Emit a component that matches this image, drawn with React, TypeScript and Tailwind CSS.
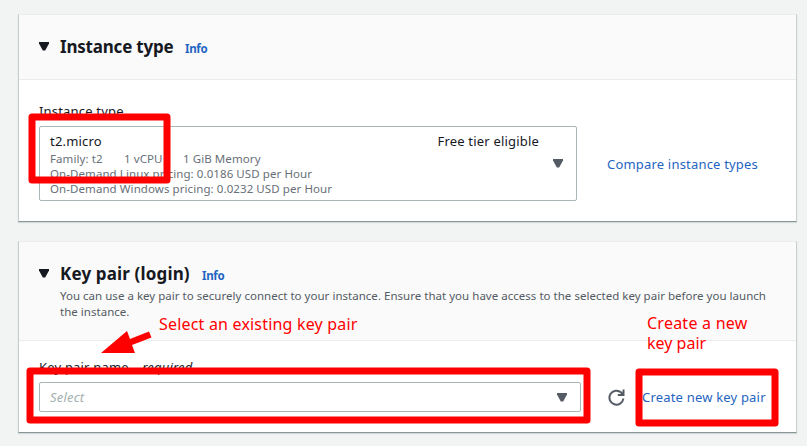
import type { ReactNode } from "react";

function Caret({ className }: { className: string }) {
  return (
    <svg viewBox="0 0 10 9" className={`h-[9px] w-[10px] shrink-0 ${className}`} fill="currentColor">
      <path d="M0 0h10v1.5L6.2 8.5H3.8L0 1.5z" />
    </svg>
  );
}

function Panel({ className, children }: { className: string; children: ReactNode }) {
  return (
    <section
      className={`ml-[18px] w-[779px] border border-t-[#eaeded] border-r-[#c9cecf] border-b-[#879596] border-l-[#c5cccd] bg-white shadow-[0_1px_1px_#d5dbdb] ${className}`}
    >
      {children}
    </section>
  );
}

const link = "text-[#1f65c2]";
const body = "text-[13px] leading-5 tracking-[0.19px]";
const info = "pt-[4px] text-[11.5px] leading-5 font-bold tracking-[-0.3px]";

export default function App() {
  return (
    <main className="relative h-[446px] w-[807px] overflow-hidden bg-[#f2f3f3] pt-[14px] font-['Noto_Sans',sans-serif] text-[#16191f] whitespace-nowrap">
      <Panel className="h-[208px]">
        <header className="flex h-[65px] border-b border-[#eaeded] bg-[#fafafa] pt-5 pl-5">
          <Caret className="mt-[7px]" />
          <h2 className="ml-[11px] w-[125px] text-[17px] leading-6 font-bold tracking-[-0.2px]">Instance type</h2>
          <a className={`${info} ${link}`}>Info</a>
        </header>
        <div className="flex px-5 pt-[21px]">
          <div className="w-[538px]">
            <p className={`h-[25px] ${body}`}>Instance type</p>
            <div className="flex h-[75px] items-center rounded-[2px] border border-[#aab7b8] pr-[13px] pl-[10px]">
              <div className="h-[73px] flex-1 pt-[4px]">
                <div className={`flex h-[20px] justify-between pr-[14px] ${body}`}>
                  <span>t2.micro</span>
                  <span>Free tier eligible</span>
                </div>
                <div className="text-[11.5px] leading-[15px] tracking-[0.08px] text-[#687078]">
                  <p className="flex">
                    <span className="w-[74px]">Family: t2</span>
                    <span className="w-[59px]">1 vCPU</span>
                    <span>1 GiB Memory</span>
                  </p>
                  <p>On-Demand Linux pricing: 0.0186 USD per Hour</p>
                  <p>On-Demand Windows pricing: 0.0232 USD per Hour</p>
                </div>
              </div>
              <Caret className="text-[#545b64]" />
            </div>
          </div>
          <a className={`mt-[53px] ml-[30px] ${body} ${link}`}>Compare instance types</a>
        </div>
      </Panel>

      <Panel className="mt-[19px] h-[192px]">
        <header className="h-[99px] border-b border-[#eaeded] bg-[#fafafa] pt-5 pl-5">
          <div className="flex">
            <Caret className="mt-[7px]" />
            <h2 className="ml-[11px] w-[142px] text-[17px] leading-6 font-bold tracking-[0.15px]">Key pair (login)</h2>
            <a className={`${info} ${link}`}>Info</a>
          </div>
          <p className="mt-[2px] ml-[21px] text-[11.5px] leading-4 tracking-[0.023px] text-[#545b64]">
            You can use a key pair to securely connect to your instance. Ensure that you have access to the selected key pair before you launch
            <br />
            the instance.
          </p>
        </header>
        <div className="flex pt-[16px] pl-5">
          <div className="w-[542px]">
            <p className={`h-[25px] ${body}`}>
              Key pair name <i className="ml-0.5">- required</i>
            </p>
            <div className={`flex h-[30px] items-center justify-between rounded-[2px] border border-[#aab7b8] pr-[13px] pl-[10px] text-[#a3b0b1] italic ${body}`}>
              <span>Select</span>
              <Caret className="text-[#545b64]" />
            </div>
          </div>
          <svg viewBox="0 0 17 17" className="mt-[32px] ml-[27px] size-[17px]" fill="none" stroke="#545b64" strokeWidth="2">
            <path d="M15.4 9.5A7 7 0 1 1 13.2 3.5L15 5.5" />
            <path d="M15.5 0.5v5.5H9.8" />
          </svg>
          <a className={`mt-[30px] ml-[17px] ${body} ${link}`}>Create new key pair</a>
        </div>
      </Panel>

      {/* Tutorial markings drawn over the console */}
      <svg viewBox="0 0 807 446" className="pointer-events-none absolute inset-0 h-[446px] w-[807px]" fill="none" stroke="#f00" strokeWidth="7" strokeLinejoin="round">
        <rect x="32" y="117" width="135" height="63" />
        <rect x="30" y="371" width="557" height="49" />
        <rect x="639" y="372" width="136" height="51" />
        <path d="M101 353l26-22 3 8 19-7.500 2.500 6-19.500 7.500 3 8z" fill="#f00" stroke="none" />
      </svg>
      <p className="absolute top-[314px] left-[159px] text-base leading-5 tracking-[0.19px] text-[#f00]">Select an existing key pair</p>
      <p className="absolute top-[313px] left-[647px] text-base leading-5 tracking-[0.24px] text-[#f00]">
        Create a new
        <br />
        <span className="tracking-normal">key pair</span>
      </p>
    </main>
  );
}
